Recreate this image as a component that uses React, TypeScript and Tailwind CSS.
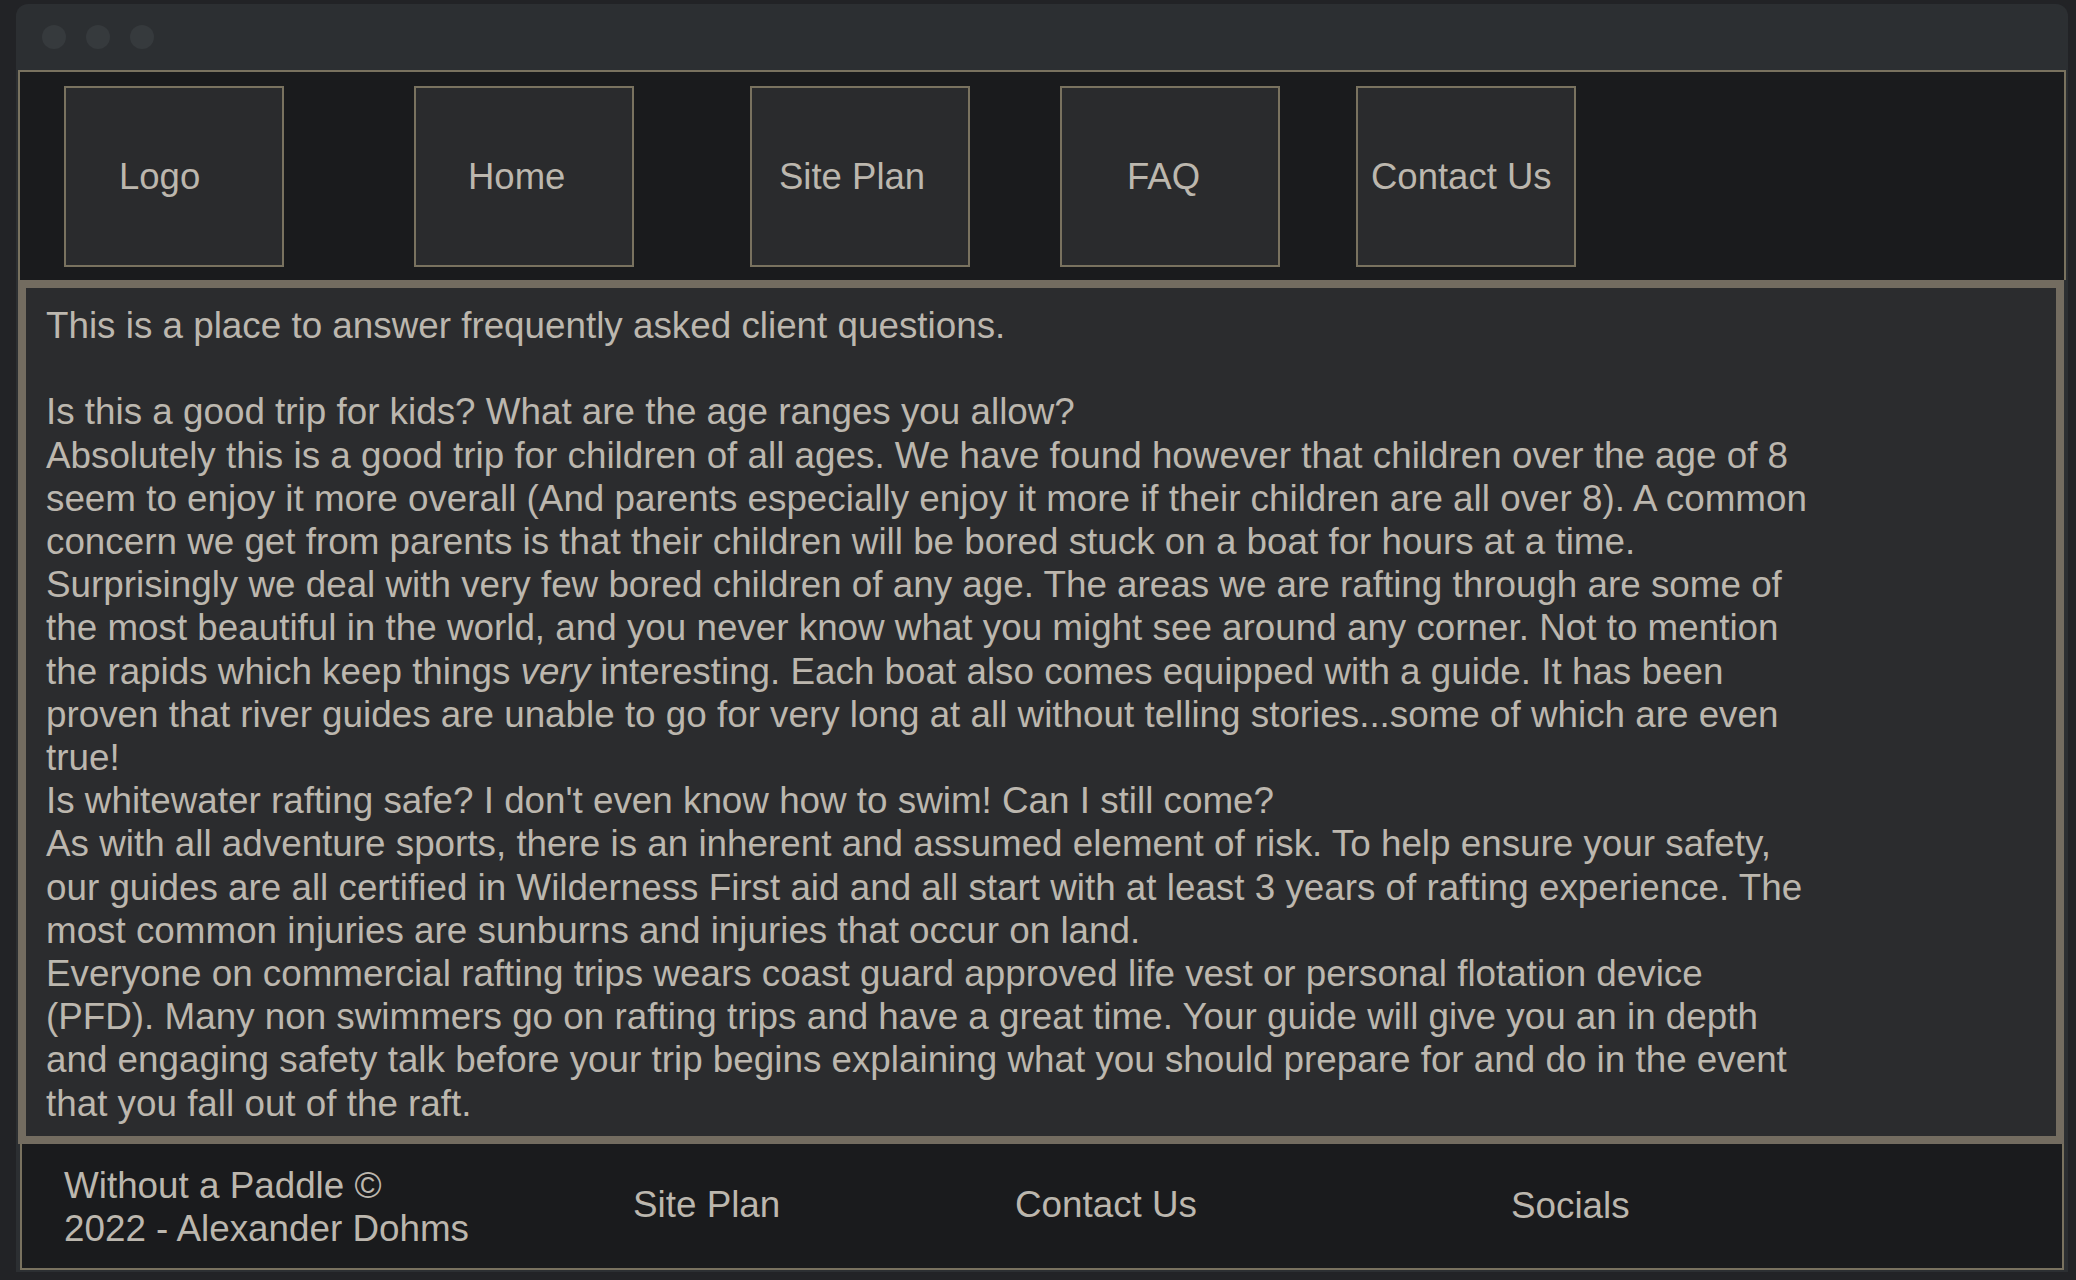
const navItems = [
  { label: "Logo", ml: "ml-[44px]", pl: "pl-[53px]" },
  { label: "Home", ml: "ml-[130px]", pl: "pl-[52px]" },
  { label: "Site Plan", ml: "ml-[116px]", pl: "pl-[27px]" },
  { label: "FAQ", ml: "ml-[90px]", pl: "pl-[65px]" },
  { label: "Contact Us", ml: "ml-[76px]", pl: "pl-[13px]" },
];

const NavBox = ({ label, ml, pl }: { label: string; ml: string; pl: string }) => (
  <div
    className={`${ml} ${pl} w-[220px] h-[181px] border-2 border-[#79725f] bg-[#2a2b2d] flex items-center text-[36.5px]`}
  >
    <span className="whitespace-nowrap">{label}</span>
  </div>
);

const App = () => {
  return (
    <div className="min-h-screen w-full bg-[#222326] pt-1 pl-4 text-[36.8px] leading-[43.2px] text-[#bcb7ae] font-['Liberation_Sans',Arial,sans-serif]">
      <div className="w-[2052px] h-[1268px] rounded-t-[12px] bg-[#2c2f32] flex flex-col">
        {/* title bar */}
        <div className="h-[66px] flex items-center gap-5 pl-[26px]">
          <div className="w-6 h-6 rounded-full bg-[#363a3d]" />
          <div className="w-6 h-6 rounded-full bg-[#363a3d]" />
          <div className="w-6 h-6 rounded-full bg-[#363a3d]" />
        </div>

        <div className="pl-[2px] flex flex-col">
          {/* header */}
          <header className="w-[2048px] h-[210px] border-2 border-b-0 border-[#79725f] bg-[#1a1b1d] flex items-start pt-[14px]">
            {navItems.map((item) => (
              <NavBox key={item.label} {...item} />
            ))}
          </header>

          {/* faq content */}
          <main className="w-[2046px] border-8 border-[#736c60] bg-[#2b2c2e] pt-4 pb-[11px] pl-5">
            <div className="max-w-[1765px]">
              <p>This is a place to answer frequently asked client questions.</p>
              <p>&nbsp;</p>
              <p>Is this a good trip for kids? What are the age ranges you allow?</p>
              <p>
                Absolutely this is a good trip for children of all ages. We have found however that children over the
                age of 8 seem to enjoy it more overall (And parents especially enjoy it more if their children are all
                over 8). A common concern we get from parents is that their children will be bored stuck on a boat for
                hours at a time. Surprisingly we deal with very few bored children of any age. The areas we are rafting
                through are some of the most beautiful in the world, and you never know what you might see around any
                corner. Not to mention the rapids which keep things <em>very</em> interesting. Each boat also comes
                equipped with a guide. It has been proven that river guides are unable to go for very long at all
                without telling stories...some of which are even true!
              </p>
              <p>Is whitewater rafting safe? I don't even know how to swim! Can I still come?</p>
              <p>
                As with all adventure sports, there is an inherent and assumed element of risk. To help ensure your
                safety, our guides are all certified in Wilderness First aid and all start with at least 3 years of
                rafting experience. The most common injuries are sunburns and injuries that occur on land.
              </p>
              <p>
                Everyone on commercial rafting trips wears coast guard approved life vest or personal flotation device
                (PFD). Many non swimmers go on rafting trips and have a great time. Your guide will give you an in depth
                and engaging safety talk before your trip begins explaining what you should prepare for and do in the
                event that you fall out of the raft.
              </p>
            </div>
          </main>

          {/* footer */}
          <footer className="ml-[2px] w-[2044px] h-[126px] border-2 border-t-0 border-[#79725f] bg-[#1a1b1d] flex items-start pt-5 pl-[42px]">
            <div className="w-[569px]">
              Without a Paddle ©
              <br />
              2022 - Alexander Dohms
            </div>
            <div className="w-[382px] mt-[19px]">Site Plan</div>
            <div className="w-[496px] mt-[19px]">Contact Us</div>
            <div className="mt-[20px]">Socials</div>
          </footer>
        </div>
      </div>
    </div>
  );
};

export default App;
